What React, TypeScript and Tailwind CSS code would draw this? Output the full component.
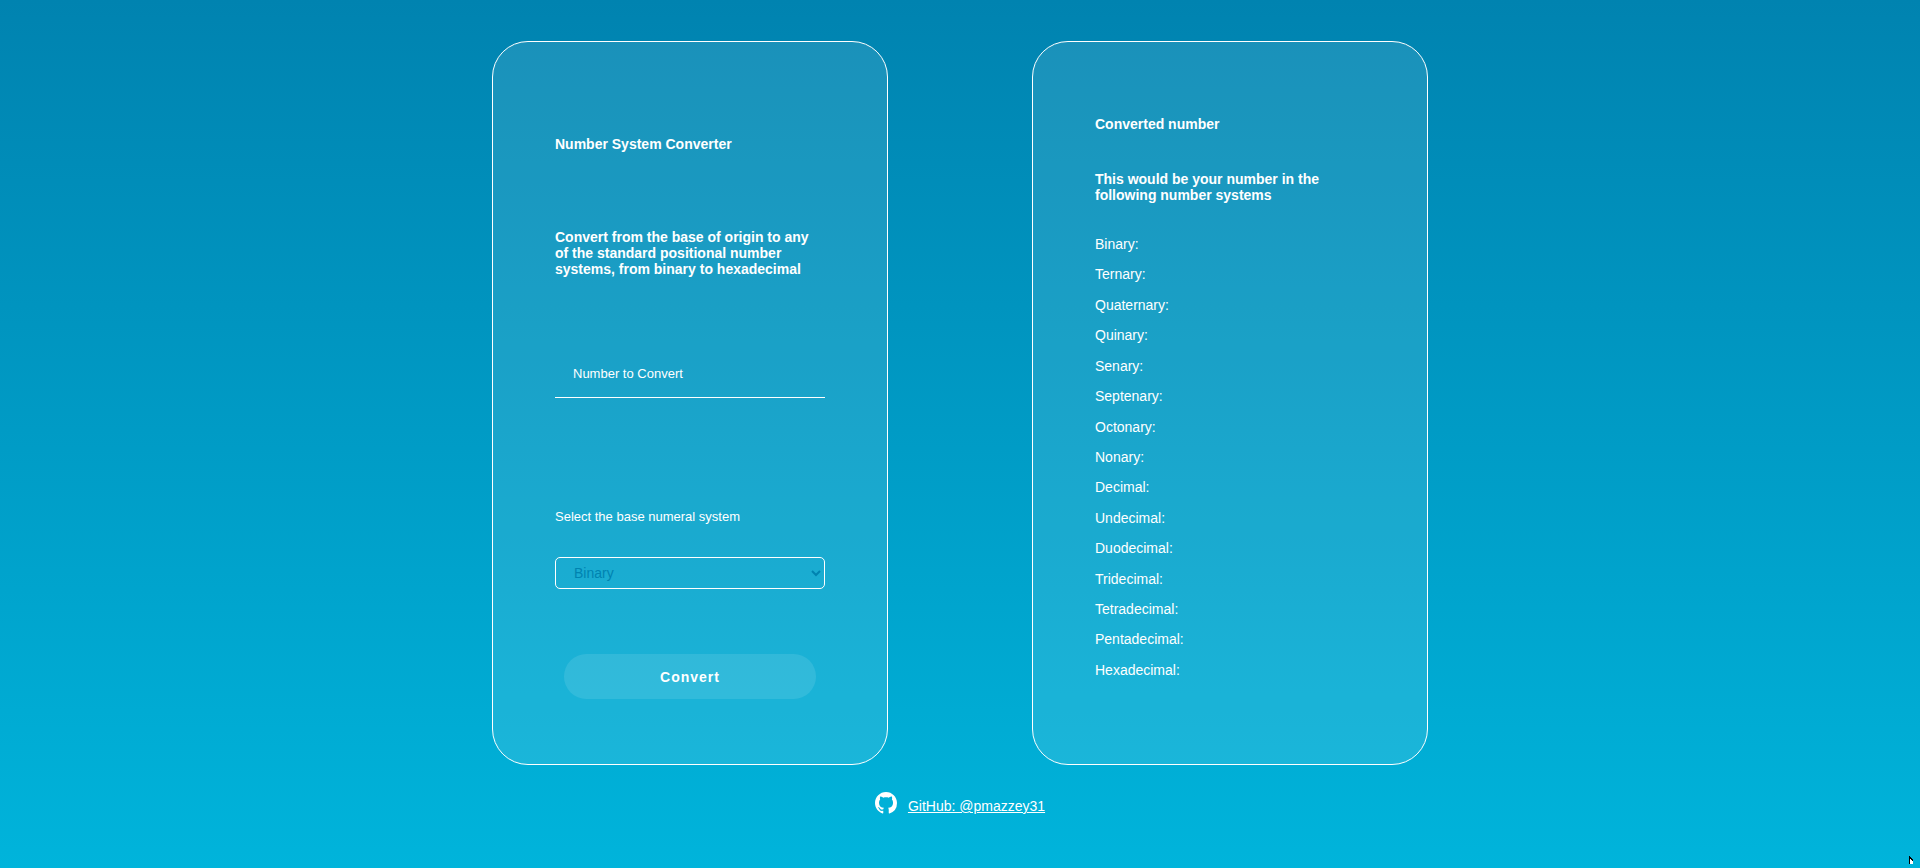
import { useState } from "react";
import type { FormEvent } from "react";

const SYSTEMS = [
  "Binary",
  "Ternary",
  "Quaternary",
  "Quinary",
  "Senary",
  "Septenary",
  "Octonary",
  "Nonary",
  "Decimal",
  "Undecimal",
  "Duodecimal",
  "Tridecimal",
  "Tetradecimal",
  "Pentadecimal",
  "Hexadecimal",
];

const CARD =
  "flex w-99 max-w-full flex-col rounded-[36px] border border-white bg-white/10 px-[62px]";

function GitHubMark() {
  return (
    <svg viewBox="0 0 16 16" className="size-[22px] fill-white" aria-hidden="true">
      <path d="M8 0C3.58 0 0 3.58 0 8c0 3.54 2.29 6.53 5.47 7.59.4.07.55-.17.55-.38 0-.19-.01-.82-.01-1.49-2.01.37-2.53-.49-2.69-.94-.09-.23-.48-.94-.82-1.13-.28-.15-.68-.52-.01-.53.63-.01 1.08.58 1.23.82.72 1.21 1.87.87 2.33.66.07-.52.28-.87.51-1.07-1.78-.2-3.64-.89-3.64-3.95 0-.87.31-1.59.82-2.15-.08-.2-.36-1.02.08-2.12 0 0 .67-.21 2.2.82.64-.18 1.32-.27 2-.27s1.36.09 2 .27c1.53-1.04 2.2-.82 2.2-.82.44 1.1.16 1.92.08 2.12.51.56.82 1.27.82 2.15 0 3.07-1.87 3.75-3.65 3.95.29.25.54.73.54 1.48 0 1.07-.01 1.93-.01 2.2 0 .21.15.46.55.38A8.01 8.01 0 0 0 16 8c0-4.42-3.58-8-8-8Z" />
    </svg>
  );
}

function Pointer() {
  return (
    <svg
      viewBox="0 0 4 8"
      shapeRendering="crispEdges"
      className="pointer-events-none absolute right-[7px] bottom-1 h-2 w-1"
      aria-hidden="true"
    >
      <path d="M0 0h1v1h1v1h1v1h1v2H3V4H2V3H1v5H0Z" fill="#000" />
      <path d="M1 3h1v1h1v1h1v3H1Z" fill="#fff" />
    </svg>
  );
}

export default function App() {
  const [value, setValue] = useState("");
  const [base, setBase] = useState(2);
  const [parsed, setParsed] = useState<number | null>(null);

  const convert = (event: FormEvent) => {
    event.preventDefault();
    const result = parseInt(value, base);
    setParsed(Number.isNaN(result) ? null : result);
  };

  return (
    <div className="relative flex min-h-screen flex-col items-center bg-linear-to-b from-[#0083b0] to-[#00b4db] px-4 pt-[41px] pb-8 font-['Liberation_Sans',Arial,sans-serif] text-[14px] leading-4 text-white">
      <main className="flex flex-wrap justify-center gap-x-36 gap-y-8">
        <form onSubmit={convert} className={`${CARD} pt-[94px] pb-[65px]`}>
          <h1 className="font-bold">Number System Converter</h1>
          <h2 className="mt-[77px] font-bold">
            Convert from the base of origin to any of the standard positional number systems, from
            binary to hexadecimal
          </h2>
          <input
            type="text"
            aria-label="Number to Convert"
            placeholder="Number to Convert"
            value={value}
            onChange={(event) => setValue(event.target.value)}
            className="mt-[73px] h-12 w-full border-b border-white bg-transparent px-[18px] text-[13px] outline-none placeholder:text-white"
          />
          <label htmlFor="base" className="mt-[111px] text-[13px]">
            Select the base numeral system
          </label>
          <select
            id="base"
            value={base}
            onChange={(event) => setBase(Number(event.target.value))}
            className="mt-8 h-8 w-full rounded-[5px] border border-white bg-transparent pl-[14px] text-[#0083b0]"
          >
            {SYSTEMS.map((name, index) => (
              <option key={name} value={index + 2}>
                {name}
              </option>
            ))}
          </select>
          <button
            type="submit"
            className="mx-[9px] mt-[65px] h-[45px] rounded-full bg-white/10 font-bold tracking-[1px]"
          >
            Convert
          </button>
        </form>

        <section className={`${CARD} pt-[74px] pb-[86px]`}>
          <h2 className="font-bold">Converted number</h2>
          <h3 className="mt-[39px] font-bold">
            This would be your number in the following number systems
          </h3>
          <ul className="mt-[33px] flex flex-1 flex-col justify-between">
            {SYSTEMS.map((name, index) => (
              <li key={name}>
                {name}: {parsed === null ? "" : parsed.toString(index + 2).toUpperCase()}
              </li>
            ))}
          </ul>
        </section>
      </main>

      <footer className="mt-[27px] flex items-end gap-[11px]">
        <GitHubMark />
        <a href="https://github.com/pmazzey31" className="underline">
          GitHub: @pmazzey31
        </a>
      </footer>

      <Pointer />
    </div>
  );
}
